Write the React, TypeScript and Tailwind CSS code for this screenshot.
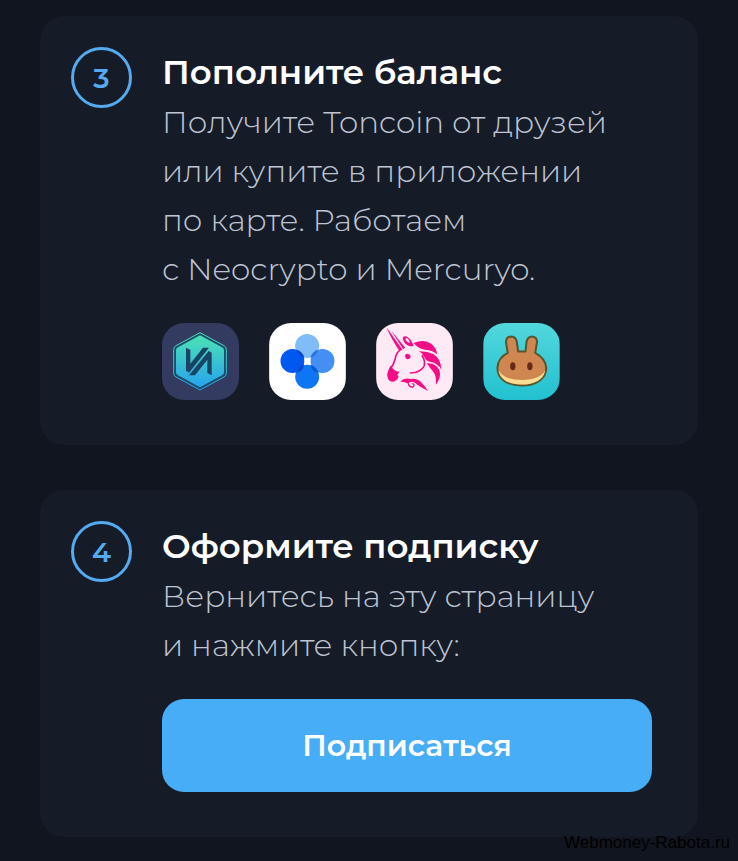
import React from 'react';

const NeocryptoIcon: React.FC = () => (
  <svg viewBox="22 24 231 231" className="w-full h-full" aria-hidden="true">
    <defs>
      <linearGradient id="neo" x1="0" y1="0" x2="0" y2="1">
        <stop offset="0" stopColor="#4be3b4" />
        <stop offset="1" stopColor="#27a2ee" />
      </linearGradient>
    </defs>
    <rect x="22" y="24" width="231" height="231" fill="#333b60" />
    <path
      d="M136 53 L208 92 Q215 96 215 103 V175 Q215 182 208 186 L136 225 L64 186 Q57 182 57 175 V103 Q57 96 64 92 Z"
      fill="#1c4d69"
      stroke="url(#neo)"
      strokeWidth="3"
      strokeLinejoin="round"
    />
    <path
      d="M136 61 L202 97 Q208 100 208 106 V172 Q208 178 202 181 L136 217 L70 181 Q64 178 64 172 V106 Q64 100 70 97 Z"
      fill="url(#neo)"
    />
    <g fill="#194464">
      <path d="M94 98 L107 105 V146 L145 98 H163 L103 173 L94 167 Z" />
      <path d="M171 181 L158 174 V134 L121 181 H103 L162 108 L171 113 Z" />
    </g>
  </svg>
);

const OkxIcon: React.FC = () => (
  <svg viewBox="27 24 230 231" className="w-full h-full" aria-hidden="true">
    <rect x="27" y="24" width="230" height="231" fill="#ffffff" />
    <circle cx="141" cy="93" r="36" fill="#7fbcf8" />
    <circle cx="187" cy="138" r="36" fill="#438ff4" />
    <circle cx="141" cy="185" r="36" fill="#0e75f4" />
    <circle cx="97" cy="138" r="36" fill="#0058f0" />
    <path d="M109 104 Q127 109 132 127 Q116 125 109 104 Z" fill="#0648cc" />
    <path d="M174 104 Q156 109 151 127 Q168 125 174 104 Z" fill="#2a75dc" />
    <path d="M109 173 Q116 153 132 149 Q127 170 109 173 Z" fill="#0648cc" />
    <path d="M174 173 Q167 153 151 149 Q156 170 174 173 Z" fill="#0759d4" />
    <rect x="133" y="130" width="17" height="17" rx="3" fill="#ffffff" />
  </svg>
);

const UniswapIcon: React.FC = () => (
  <svg viewBox="22 24 230 231" className="w-full h-full" aria-hidden="true">
    <rect x="22" y="24" width="230" height="231" fill="#feeaf5" />
    <g fill="#f50d86">
      <path d="M53 37 L101 104 L92 108 Q67 72 53 37 Z" />
      <path d="M66 45 L109 98 L103 103 Z" />
      <path d="M102 66 Q112 58 126 75 L135 92 Q126 96 116 91 Q102 82 102 66 Z" />
      <path d="M134 84 Q167 71 188 87 Q203 99 205 118 Q190 105 169 104 Q151 103 134 84 Z" />
      <path d="M150 109 Q174 108 193 117 Q215 128 218 164 Q205 144 187 141 Q171 138 166 125 Q162 114 150 109 Z" />
      <path d="M174 145 Q201 143 212 166 Q218 189 201 209 Q204 183 192 169 Q182 158 174 145 Z" />
      <path d="M109 119 Q118 112 125 122 Q127 132 115 133 Q108 130 109 119 Z" />
      <path d="M65 152 Q75 168 92 171 L85 180 Q94 184 84 194 Q73 204 62 197 Q51 185 58 167 Z" />
      <path d="M94 201 Q105 187 126 192 Q146 189 157 202 Q169 214 178 228 Q151 214 138 203 Q124 197 118 206 Q104 199 94 201 Z" />
    </g>
    <path d="M110 72 Q115 63 124 83 Q115 85 110 72 Z" fill="#feeaf5" />
    <g fill="none" stroke="#f50d86" strokeLinecap="round">
      <path d="M92 107 Q82 114 79 132 Q75 148 64 163" strokeWidth="5" />
      <path d="M160 122 Q170 137 166 153 Q157 172 125 174" strokeWidth="5" />
      <path d="M119 207 Q120 217 132 216 Q139 211 132 206" strokeWidth="4" />
    </g>
  </svg>
);

const PancakeIcon: React.FC = () => (
  <svg viewBox="24 24 228 230" className="w-full h-full" aria-hidden="true">
    <defs>
      <linearGradient id="cake" x1="0" y1="0" x2="0" y2="1">
        <stop offset="0" stopColor="#52d7dc" />
        <stop offset="1" stopColor="#22c1d0" />
      </linearGradient>
    </defs>
    <rect x="24" y="24" width="228" height="230" fill="url(#cake)" />
    <path
      d="M97 113 L92 83 Q91 65 107 64 Q121 64 124 80 L128 109 H150 L153 80 Q156 64 170 64 Q186 66 184 83 L179 113 Q210 130 212 158 C212 191 180 211 139 211 C96 211 66 191 66 158 Q68 127 97 113 Z"
      fill="#d08650"
      stroke="#56552c"
      strokeWidth="6"
      strokeLinejoin="round"
    />
    <path
      d="M69 165 Q85 194 139 194 Q193 194 209 165 C205 193 176 208 139 208 C99 208 74 193 69 165 Z"
      fill="#fbdc91"
    />
    <ellipse cx="112" cy="153" rx="8" ry="12" fill="#642c18" />
    <ellipse cx="163" cy="153" rx="8" ry="12" fill="#642c18" />
  </svg>
);

const apps = [
  { name: 'Neocrypto', icon: NeocryptoIcon },
  { name: 'OKX', icon: OkxIcon },
  { name: 'Uniswap', icon: UniswapIcon },
  { name: 'PancakeSwap', icon: PancakeIcon },
];

interface StepProps {
  number: number;
  title: string;
  children: React.ReactNode;
}

const Step: React.FC<StepProps> = ({ number, title, children }) => (
  <section className="flex items-start gap-[30px] rounded-3xl bg-[#151c28] pt-[31px] pl-[31px] pr-[46px] pb-[45px]">
    <div className="flex size-[61px] shrink-0 items-center justify-center rounded-full border-[3px] border-[#55aaf0] text-[28px] font-semibold text-[#55aaf0]">
      {number}
    </div>
    <div className="min-w-0 flex-1">
      <h2 className="text-[34px] leading-[51px] font-semibold text-white">{title}</h2>
      {children}
    </div>
  </section>
);

const App: React.FC = () => {
  return (
    <div className="min-h-screen bg-[#11151f] px-10 pt-4 font-['Montserrat','Inter',sans-serif]">
      <main className="flex flex-col gap-[45px]">
        <Step number={3} title="Пополните баланс">
          <p className="text-[31px] leading-[49px] font-[350] text-[#bfc4d2]">
            Получите Toncoin от друзей
            <br />
            или купите в приложении
            <br />
            по карте. Работаем
            <br />
            с Neocrypto и Mercuryo.
          </p>
          <ul className="mt-[29px] flex gap-[30px]">
            {apps.map(({ name, icon: Icon }) => (
              <li key={name}>
                <a href="#" aria-label={name} className="block size-[77px] overflow-hidden rounded-[22px]">
                  <Icon />
                </a>
              </li>
            ))}
          </ul>
        </Step>

        <Step number={4} title="Оформите подписку">
          <p className="text-[31px] leading-[49px] font-[350] text-[#bfc4d2]">
            Вернитесь на эту страницу
            <br />
            и нажмите кнопку:
          </p>
          <button
            type="button"
            className="mt-[29px] h-[93px] w-full rounded-[22px] bg-[#47adf6] text-[30px] font-semibold text-white"
          >
            Подписаться
          </button>
        </Step>
      </main>

      <footer className="flex justify-end -mt-1 -mr-8 font-['Liberation_Sans',sans-serif] text-[17px] leading-5 text-black">
        Webmoney-Rabota.ru
      </footer>
    </div>
  );
};

export default App;
